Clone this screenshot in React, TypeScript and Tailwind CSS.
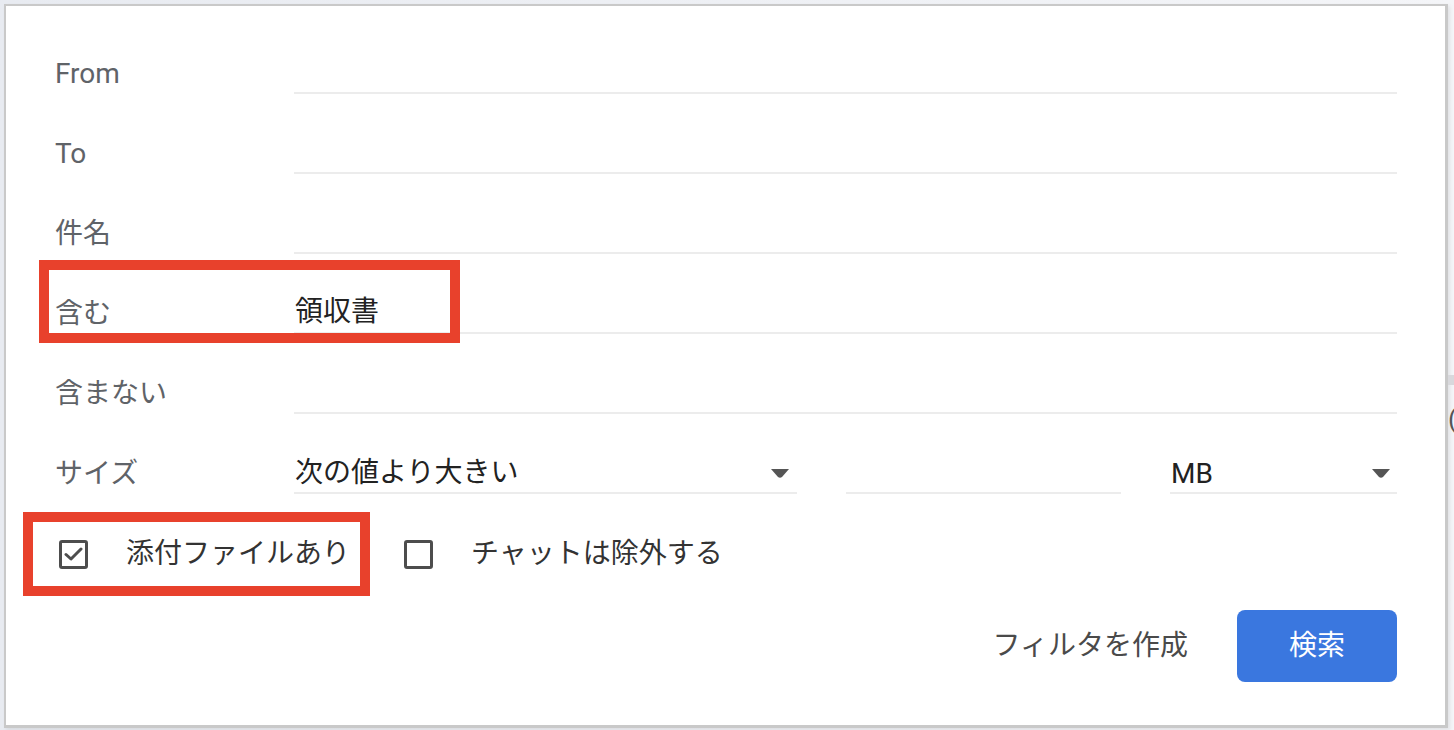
import React from "react";

const font = { fontFamily: '"Roboto", "Noto Sans CJK JP", sans-serif' };

function Arrow() {
  return (
    <svg width="18" height="9" viewBox="0 0 18 9" className="shrink-0">
      <path d="M0 0 H18 L11 8 Q9 9.5 7 8 Z" fill="#555" />
    </svg>
  );
}

function Row({ label, value }: { label: string; value?: string }) {
  return (
    <div className="flex h-[80px] items-end">
      <div className="w-[239px] pb-[2px] text-[28px] leading-[36px] text-[#5f6368]">{label}</div>
      <div className="flex h-full flex-1 items-end border-b-2 border-[#ececec] pb-[2px]">
        <span className="pl-[1px] text-[28px] leading-[36px] text-[#222]">{value ?? ""}</span>
      </div>
    </div>
  );
}

function CheckBox({ checked }: { checked?: boolean }) {
  return (
    <div className="flex h-[29px] w-[29px] shrink-0 items-center justify-center rounded-[3px] border-[3px] border-[#4d4d4d]">
      {checked && (
        <svg width="19" height="15" viewBox="0 0 19 15">
          <path d="M2 7.5 L7 12 L17 2" fill="none" stroke="#4d4d4d" strokeWidth="3" strokeLinecap="round" strokeLinejoin="round" />
        </svg>
      )}
    </div>
  );
}

export default function App() {
  return (
    <div className="relative h-[730px] w-[1454px] overflow-hidden bg-gradient-to-r from-[#e8ebf1] to-[#f4f5f8]" style={font}>
      <div className="absolute right-0 top-[375px] h-[10px] w-[6px] bg-[#d8d8dc]" />
      <div className="absolute right-0 top-[404px] h-[30px] w-[6px] overflow-hidden text-[26px] leading-[30px] text-[#555]">(</div>
      <div className="ml-[4px] mt-[4px] h-[724px] w-[1444px] border-2 border-b-[3px] border-r-[3px] border-[#c9c9c9] bg-white pl-[49px] pr-[48px] pt-[8px] shadow-[2px_2px_4px_rgba(0,0,0,0.08)]">
        <Row label="From" />
        <Row label="To" />
        <Row label="件名" />
        <Row label="含む" value="領収書" />
        <Row label="含まない" />
        <div className="flex h-[80px] items-end">
          <div className="w-[239px] pb-[2px] text-[28px] leading-[36px] text-[#5f6368]">サイズ</div>
          <div className="flex h-full w-[503px] items-end justify-between border-b-2 border-[#ececec] pb-[1px] pr-[8px]">
            <span className="pl-[1px] text-[28px] leading-[36px] text-[#222]">次の値より大きい</span>
            <div className="mb-[13px]"><Arrow /></div>
          </div>
          <div className="ml-[49px] h-full w-[275px] border-b-2 border-[#ececec]" />
          <div className="ml-[49px] flex h-full flex-1 items-end justify-between border-b-2 border-[#ececec] pb-0 pr-[7px]">
            <span className="pl-[1px] text-[28px] leading-[36px] text-[#222]">MB</span>
            <div className="mb-[14px]"><Arrow /></div>
          </div>
        </div>
        <div className="mt-[30px] flex h-[60px] items-center pl-[4px]">
          <CheckBox checked />
          <span className="ml-[38px] text-[28px] leading-[36px] text-[#333]">添付ファイルあり</span>
          <div className="ml-[54px]"><CheckBox /></div>
          <span className="ml-[38px] text-[28px] leading-[36px] text-[#333]">チャットは除外する</span>
        </div>
        <div className="mt-[26px] flex items-center justify-end">
          <span className="mr-[49px] text-[28px] leading-[36px] text-[#4a4a4a]">フィルタを作成</span>
          <div className="flex h-[72px] w-[160px] items-center justify-center rounded-[8px] bg-[#3a77df] text-[28px] leading-[36px] text-white">検索</div>
        </div>
      </div>
      <div className="pointer-events-none absolute left-[39px] top-[260px] h-[83px] w-[421px] border-[10px] border-[#e8412c]" />
      <div className="pointer-events-none absolute left-[23px] top-[512px] h-[84px] w-[347px] border-[10px] border-[#e8412c]" />
    </div>
  );
}
